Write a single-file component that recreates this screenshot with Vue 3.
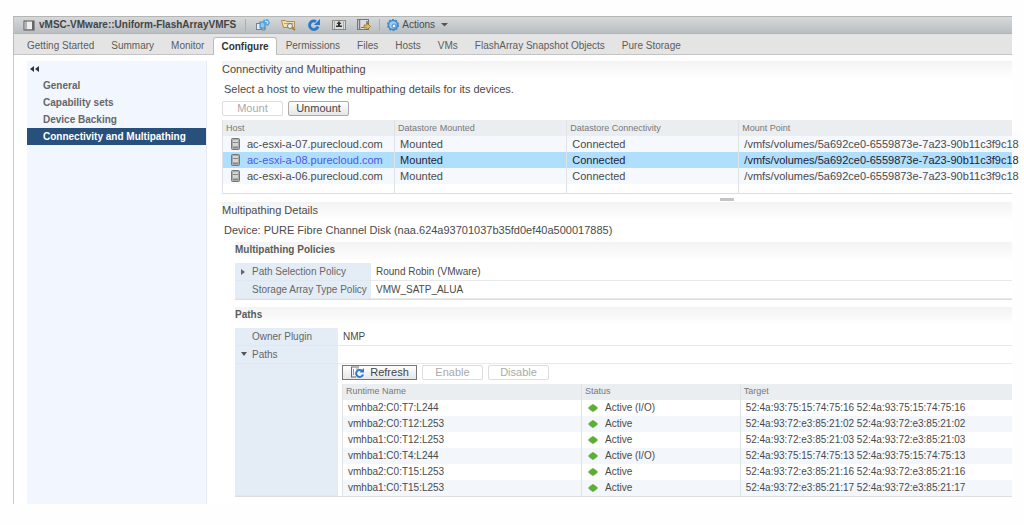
<script setup>
import { ref } from 'vue'

const tabs = ['Getting Started', 'Summary', 'Monitor', 'Configure', 'Permissions', 'Files', 'Hosts', 'VMs', 'FlashArray Snapshot Objects', 'Pure Storage']
const activeTab = ref('Configure')

const sections = ['General', 'Capability sets', 'Device Backing', 'Connectivity and Multipathing']
const activeSection = ref('Connectivity and Multipathing')

const mountPoint = '/vmfs/volumes/5a692ce0-6559873e-7a23-90b11c3f9c18'
const hosts = ['ac-esxi-a-07.purecloud.com', 'ac-esxi-a-08.purecloud.com', 'ac-esxi-a-06.purecloud.com']
const selectedHost = ref('ac-esxi-a-08.purecloud.com')

const paths = [
  { name: 'vmhba2:C0:T7:L244', status: 'Active (I/O)', target: '52:4a:93:75:15:74:75:16 52:4a:93:75:15:74:75:16' },
  { name: 'vmhba2:C0:T12:L253', status: 'Active', target: '52:4a:93:72:e3:85:21:02 52:4a:93:72:e3:85:21:02' },
  { name: 'vmhba1:C0:T12:L253', status: 'Active', target: '52:4a:93:72:e3:85:21:03 52:4a:93:72:e3:85:21:03' },
  { name: 'vmhba1:C0:T4:L244', status: 'Active (I/O)', target: '52:4a:93:75:15:74:75:13 52:4a:93:75:15:74:75:13' },
  { name: 'vmhba2:C0:T15:L253', status: 'Active', target: '52:4a:93:72:e3:85:21:16 52:4a:93:72:e3:85:21:16' },
  { name: 'vmhba1:C0:T15:L253', status: 'Active', target: '52:4a:93:72:e3:85:21:17 52:4a:93:72:e3:85:21:17' },
]
</script>

<template>
  <div class="page">
    <header class="titlebar">
      <svg class="ds" width="13" height="11" viewBox="0 0 13 11"><rect x="1" y="1" width="10" height="9" fill="#eee" stroke="#555" /><path d="M3 1v9" stroke="#777" /><path d="M10 1v9" stroke="#666" stroke-width="2" /><path d="M4 9.500h5" stroke="#888" /></svg>
      <h1>vMSC-VMware::Uniform-FlashArrayVMFS</h1>
      <span class="sep"></span>
      <div class="tools">
        <button aria-label="Register virtual machine"><svg width="15" height="12" viewBox="0 0 15 12"><rect x="1.500" y="4.500" width="5" height="6" fill="#e8eef4" stroke="#6b8299" /><rect x="5" y="3" width="5" height="6" fill="#8fc8f0" stroke="#3f86bd" /><path d="M8 1l5-1 2 4-2 3-3-1-2-2z" fill="#5aa6dc" /><path d="M10 2l3 1-1 2" stroke="#dff0fc" fill="none" /><path d="M7 11h3V8" stroke="#6b8299" fill="none" /></svg></button>
        <button aria-label="Browse files"><svg width="15" height="12" viewBox="0 0 15 12"><path d="M.5 1.500h4l1 1h8v6h-11z" fill="#f3dfae" stroke="#b58b45" /><path d="M3 4.500h9" stroke="#c9a05a" /><circle cx="9" cy="7" r="2.500" fill="#eee" stroke="#777" /><path d="M11 9l3 2" stroke="#b07a32" stroke-width="2" /></svg></button>
        <button aria-label="Refresh"><svg width="14" height="12" viewBox="0 0 14 12"><path d="M11 7.500A4.300 4.300 0 1 1 9 2.500" fill="none" stroke="#2c78c4" stroke-width="2.800" /><path d="M7 6h6V0z" fill="#2c78c4" /></svg></button>
        <button aria-label="Increase capacity"><svg width="14" height="12" viewBox="0 0 14 12"><rect x=".5" y="1.500" width="13" height="9" fill="#ddd" stroke="#888" /><path d="M2.500 1v9M11.500 1v9" stroke="#aaa" /><path d="M7 2l2.500 3H8v1.500h2V8H4V6.500h2V5H4.500z" fill="#333" /></svg></button>
        <button aria-label="Manage storage"><svg width="14" height="12" viewBox="0 0 14 12"><rect x=".5" y=".5" width="11" height="10" fill="#ddd" stroke="#777" /><path d="M2.500 1v9M10 2v3" stroke="#777" stroke-width="1.500" /><path d="M4 8.500h4" stroke="#777" /><path d="M7 6h3V4l3.500 3.500L10 11V9H7z" fill="#e5b94f" stroke="#8a6a24" stroke-width=".7" /></svg></button>
      </div>
      <span class="sep"></span>
      <button class="actions">
        <svg width="14" height="12" viewBox="0 0 14 12"><circle cx="7" cy="6" r="4.500" fill="#9fcbee" stroke="#3f8acb" stroke-width="1.600" /><circle cx="7" cy="6" r="5.400" fill="none" stroke="#3f8acb" stroke-width="1.200" stroke-dasharray="2 1.400" /><circle cx="8" cy="7" r="2" fill="#f4f8fc" stroke="#3f8acb" /></svg>
        Actions
        <svg width="7" height="4" viewBox="0 0 7 4"><path d="M0 0h7L3.500 3.500z" fill="#555" /></svg>
      </button>
    </header>

    <nav class="tabs" aria-label="Object tabs">
      <button v-for="t in tabs" :key="t" :class="{ on: t === activeTab }" @click="activeTab = t">{{ t }}</button>
    </nav>

    <div class="body">
      <aside>
        <button class="collapse" aria-label="Collapse"><svg width="9" height="6" viewBox="0 0 9 6"><path d="M4 0v6L0 3zM9 0v6L5 3z" fill="#333" /></svg></button>
        <button v-for="s in sections" :key="s" class="item" :class="{ on: s === activeSection }" @click="activeSection = s">{{ s }}</button>
      </aside>

      <main>
        <h2>Connectivity and Multipathing</h2>
        <p class="hint">Select a host to view the multipathing details for its devices.</p>
        <div class="buttons top">
          <button class="btn" disabled>Mount</button>
          <button class="btn">Unmount</button>
        </div>

        <table class="hosts">
          <colgroup><col class="h1" /><col class="h1" /><col class="h1" /><col /></colgroup>
          <thead>
            <tr><th>Host</th><th>Datastore Mounted</th><th>Datastore Connectivity</th><th>Mount Point</th></tr>
          </thead>
          <tbody>
            <tr v-for="h in hosts" :key="h" :class="{ sel: h === selectedHost }" @click="selectedHost = h">
              <td>
                <span class="host"><svg width="9" height="12" viewBox="0 0 9 12"><rect x=".5" y=".5" width="8" height="11" rx="1" fill="#aaa" stroke="#777" /><rect x="2" y="2" width="5" height="6" fill="#d4d4d4" /><path d="M2 4.500h5M2 9.500h5" stroke="#888" /></svg>{{ h }}</span>
              </td>
              <td>Mounted</td><td>Connected</td><td>{{ mountPoint }}</td>
            </tr>
            <tr class="rest"><td></td><td></td><td></td><td></td></tr>
          </tbody>
        </table>
        <div class="splitter"><i></i></div>

        <h2>Multipathing Details</h2>
        <p class="hint">Device: PURE Fibre Channel Disk (naa.624a93701037b35fd0ef40a500017885)</p>

        <section>
          <h3>Multipathing Policies</h3>
          <dl class="props wide">
            <dt><svg class="tw" width="5" height="6" viewBox="0 0 5 6"><path d="M0 0l4 3-4 3z" fill="#666" /></svg>Path Selection Policy</dt>
            <dd>Round Robin (VMware)</dd>
            <dt>Storage Array Type Policy</dt>
            <dd>VMW_SATP_ALUA</dd>
          </dl>
        </section>

        <section>
          <h3>Paths</h3>
          <dl class="props">
            <dt>Owner Plugin</dt>
            <dd>NMP</dd>
            <dt><svg class="tw" width="6" height="4" viewBox="0 0 6 4"><path d="M0 0h6L3 4z" fill="#555" /></svg>Paths</dt>
            <dd></dd>
            <dt></dt>
            <dd class="panel">
              <div class="buttons">
                <button class="btn strong"><svg width="15" height="12" viewBox="0 0 15 12"><path d="M1 1h8M1 11h5M1.500 1v10" stroke="#667" fill="none" /><path d="M3.500 3v6M6 3h3" stroke="#99a" /><path d="M13 8.500A3.500 3.500 0 1 1 12 4.800" fill="none" stroke="#2c78c4" stroke-width="2" /><path d="M9.500 6.500H14V2z" fill="#2c78c4" /></svg>Refresh</button>
                <button class="btn" disabled>Enable</button>
                <button class="btn" disabled>Disable</button>
              </div>
              <table class="paths">
                <colgroup><col class="p1" /><col class="p2" /><col /></colgroup>
                <thead><tr><th>Runtime Name</th><th>Status</th><th>Target</th></tr></thead>
                <tbody>
                  <tr v-for="p in paths" :key="p.name">
                    <td>{{ p.name }}</td>
                    <td><span class="status"><svg width="10" height="8" viewBox="0 0 10 8"><path d="M5 0l3 2 2 2-2 2-3 2-3-2-2-2 2-2z" fill="#5fae35" /></svg>{{ p.status }}</span></td>
                    <td>{{ p.target }}</td>
                  </tr>
                </tbody>
              </table>
            </dd>
          </dl>
        </section>
      </main>
    </div>
  </div>
</template>

<style>
body { margin: 0; background: #fefefe; }
</style>

<style scoped>
.page { padding: 16px 12px 22px 13px; font: 11px/16px "Liberation Sans", Arial, sans-serif; color: #4a4a4a; }
* { box-sizing: border-box; }
h1, h2, h3, p, dl, dd, dt { margin: 0; font-size: inherit; font-weight: normal; }
button { font: inherit; color: inherit; margin: 0; padding: 0; border: 0; background: none; white-space: nowrap; }
svg { flex: none; display: block; }

.titlebar { display: flex; align-items: center; height: 18px; padding-left: 9px; border-top: 1px solid #b5b5b3; border-left: 1px solid #bbb; border-bottom: 1px solid #b0b4b7; background: linear-gradient(#d6d9db, #b9bec2); }
.titlebar h1 { margin-left: 3px; font-weight: bold; font-size: 10px; color: #444; white-space: nowrap; }
.sep { width: 1px; height: 12px; margin: 0 9px; background: #aaaeb1; }
.tools { display: flex; gap: 11px; }
.tools + .sep { margin: 0 6px 0 8px; }
.actions { display: flex; align-items: center; gap: 2px; font-size: 10px; }
.actions svg:last-child { margin-left: 4px; }

.tabs { display: flex; align-items: flex-end; gap: 1px; height: 21px; padding-left: 5px; font-size: 10px; background: #e4e4e4; border-left: 1px solid #bbb; border-bottom: 1px solid #c4c4c4; }
.tabs button { height: 17px; padding: 0 8px; color: #5c5c5c; }
.tabs .on { background: #fff; font-weight: bold; color: #333; height: 18px; padding: 0 7px; margin-bottom: -1px; border: solid #bbb; border-width: 1px 1px 0; border-radius: 3px 3px 0 0; }

.body { display: flex; gap: 15px; padding: 6px 0 0 13px; border-left: 1px solid #c9c9c9; background: #fff; }
aside { flex: 0 0 180px; display: flex; flex-direction: column; background: #f2f6fe; border-right: 1px solid #e6e9ee; }
.collapse { padding: 5px 3px; }
.item { height: 17px; padding-left: 16px; text-align: left; font-weight: bold; font-size: 10px; color: #666; }
.item.on { background: #28507c; color: #fff; }

main { flex: 1; min-width: 0; }
h2, h3 { height: 18px; line-height: 16px; background: linear-gradient(#f3f3f3, #fff); }
h3 { font-weight: bold; font-size: 10px; color: #5c5c5c; }
.hint { padding: 2px; white-space: nowrap; }
.buttons { display: flex; gap: 5px; }
.top { padding: 2px 0 4px; }
.btn { height: 15px; min-width: 61px; line-height: 13px; padding: 0 6px; display: flex; align-items: center; justify-content: center; gap: 5px; border: 1px solid #aaa; border-radius: 2px; background: linear-gradient(#fff, #e6e6e6); color: #444; }
.btn.strong { min-width: 75px; border-color: #777; border-radius: 0; }
.btn:disabled { color: #aaa; border-color: #ddd; background: #fff; }

table { width: 100%; table-layout: fixed; border-collapse: collapse; }
th, td { height: 16px; padding: 0 0 0 5px; line-height: 15px; text-align: left; white-space: nowrap; border-left: 1px solid #dfe3e7; }
th { padding-left: 3px; font-size: 9px; font-weight: normal; color: #777; background: #ebeef1; }
.hosts { border-bottom: 1px solid #ddd; }
.h1 { width: 21.8%; }
.hosts tbody tr { background: #f5f8fd; }
.hosts tbody .sel { background: #b0defd; color: #223; }
.sel .host { color: #4a5be0; }
.hosts .rest { background: #fff; }
.rest td { height: 9px; }
.host { display: flex; align-items: center; gap: 7px; padding-left: 3px; }
.splitter { height: 8px; padding-top: 4px; }
.splitter i { display: block; width: 14px; height: 3px; margin-left: 63%; background: #c4c4c4; }

section { margin: 2px 0 7px 13px; }
.props { display: grid; grid-template-columns: 103px 1fr; margin-top: 3px; font-size: 10px; border-bottom: 1px solid #ddd; }
.props.wide { grid-template-columns: 136px 1fr; }
dt { position: relative; min-height: 18px; line-height: 17px; padding-left: 17px; background: #e4edf6; color: #666; white-space: nowrap; border-bottom: 1px solid #dfe8f0; }
dd { min-height: 18px; line-height: 17px; padding-left: 5px; border-bottom: 1px solid #e9e9e9; }
.tw { position: absolute; left: 6px; top: 6px; }
.panel { padding: 1px 0 0 4px; border: 0; }
.panel .buttons { padding-bottom: 4px; font-size: 11px; }
.p1 { width: 35.7%; }
.p2 { width: 23.7%; }
.paths tbody tr:nth-child(even) { background: #f3f7fc; }
.status { display: flex; align-items: center; gap: 7px; padding-left: 1px; }
</style>
